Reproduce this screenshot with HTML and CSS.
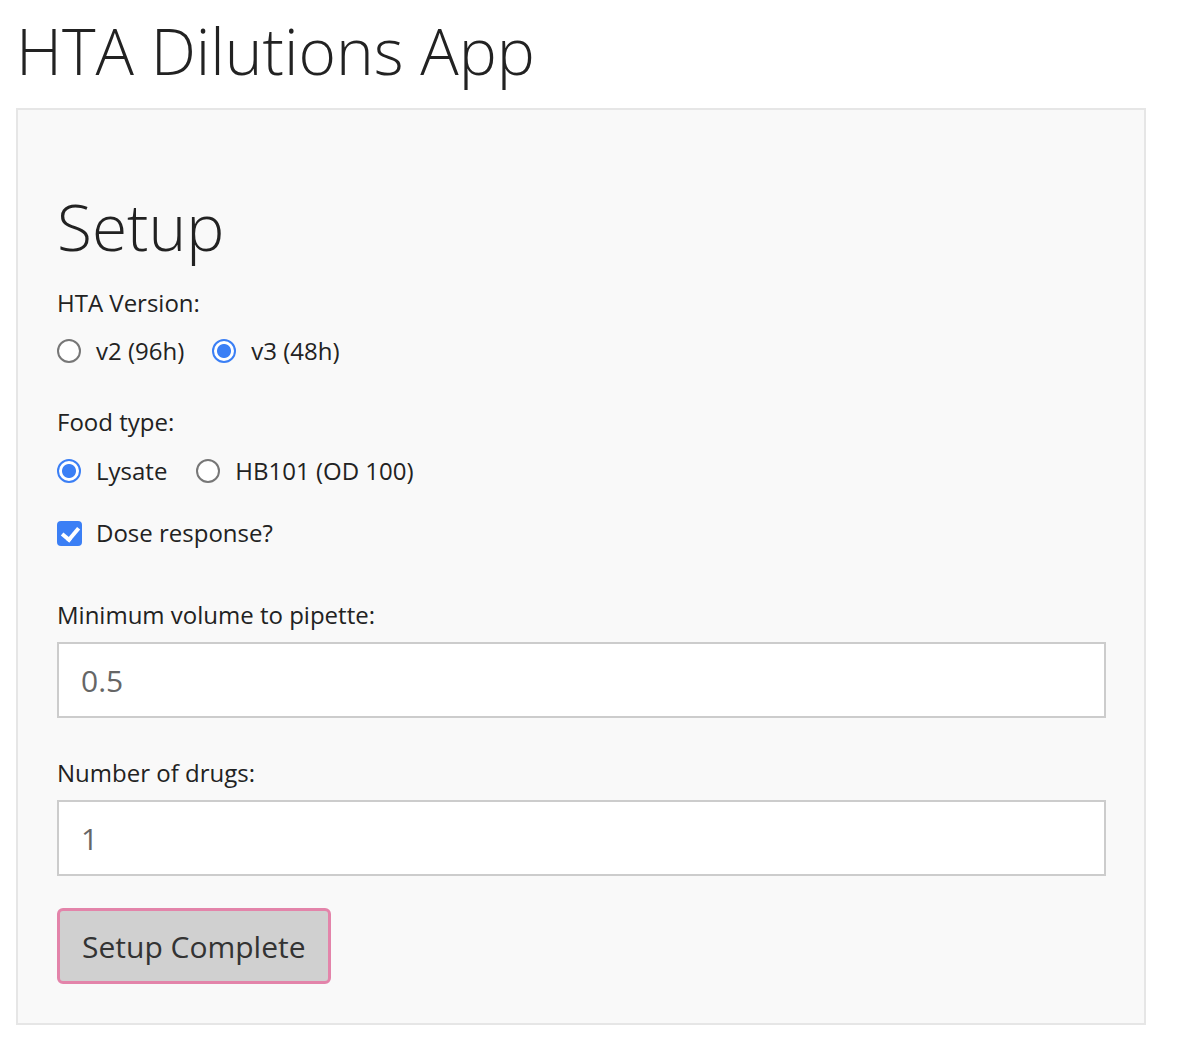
FILE: index.html
```html
<!DOCTYPE html>
<html>
<head>
<meta charset="utf-8">
<link rel="stylesheet" href="styles.css">
</head>
<body>
<div class="page">
  <h1 class="title">HTA Dilutions App</h1>
  <div class="well">
    <h2 class="section-title">Setup</h2>

    <div class="group group-radio1">
      <div class="label">HTA Version:</div>
      <div class="options">
        <label class="opt"><input type="radio" name="ver" class="radio"><span>v2 (96h)</span></label>
        <label class="opt"><input type="radio" name="ver" class="radio" checked><span>v3 (48h)</span></label>
      </div>
    </div>

    <div class="group group-radio2">
      <div class="label">Food type:</div>
      <div class="options">
        <label class="opt"><input type="radio" name="food" class="radio" checked><span>Lysate</span></label>
        <label class="opt"><input type="radio" name="food" class="radio"><span>HB101 (OD 100)</span></label>
      </div>
    </div>

    <div class="group group-check">
      <label class="opt"><input type="checkbox" class="check" checked><span>Dose response?</span></label>
    </div>

    <div class="group group-input1">
      <div class="label">Minimum volume to pipette:</div>
      <input class="field" type="text" value="0.5">
    </div>

    <div class="group group-input2">
      <div class="label">Number of drugs:</div>
      <input class="field" type="text" value="1">
    </div>

    <button class="btn">Setup Complete</button>
  </div>
</div>
</body>
</html>
```

FILE: styles.css
```css
* { box-sizing: border-box; }
html, body {
  margin: 0;
  padding: 0;
  background: #ffffff;
}
body {
  font-family: "Open Sans", "Noto Sans", sans-serif;
  color: #222222;
}
.page {
  padding: 12px 32px 30px 16px;
}
.title {
  margin: 0 0 19px 0;
  font-size: 64px;
  font-weight: 300;
  line-height: 77px;
  color: #222222;
}
.well {
  background: #f9f9f9;
  border: 2px solid #e6e6e6;
  padding: 39px 38px 39px 39px;
  display: flex;
  flex-direction: column;
  align-items: flex-start;
}
.section-title {
  margin: 41px 0 0 0;
  font-size: 64px;
  font-weight: 300;
  line-height: 73px;
  color: #222222;
}
.group {
  display: flex;
  flex-direction: column;
  align-self: stretch;
}
.label {
  font-size: 24px;
  line-height: 32px;
  color: #222222;
}
.group-radio1 { margin-top: 24px; }
.group-radio2 { margin-top: 39px; }
.group-check { margin-top: 30px; }
.group-input1 { margin-top: 50px; }
.group-input2 { margin-top: 39px; }
.options {
  display: flex;
  gap: 28px;
  margin-top: 16px;
}
.group-radio2 .options { margin-top: 17px; gap: 29px; }
.opt {
  display: flex;
  align-items: center;
  gap: 15px;
  font-size: 24px;
  line-height: 32px;
  color: #222222;
}
.radio {
  appearance: none;
  -webkit-appearance: none;
  margin: 0;
  width: 24px;
  height: 24px;
  border-radius: 50%;
  border: 2px solid #777777;
  background: #ffffff;
  flex: none;
}
.radio:checked {
  border: 2px solid #3b7ff5;
  background: radial-gradient(circle, #3b7ff5 0 6.5px, #ffffff 7.5px);
}
.check {
  appearance: none;
  -webkit-appearance: none;
  margin: 0;
  width: 25px;
  height: 25px;
  border-radius: 4px;
  background: #3b7ff5;
  flex: none;
  position: relative;
}
.check::after {
  content: "";
  position: absolute;
  left: 8px;
  top: 3px;
  width: 7px;
  height: 13px;
  border-right: 4px solid #ffffff;
  border-bottom: 4px solid #ffffff;
  transform: rotate(40deg);
}
.group-check .opt { gap: 14px; }
.field {
  margin-top: 11px;
  height: 76px;
  width: 100%;
  border: 2px solid #cccccc;
  background: #ffffff;
  padding: 0 22px;
  font-family: "Open Sans", "Noto Sans", sans-serif;
  font-size: 30px;
  color: #666666;
  outline: none;
}
.btn {
  margin-top: 32px;
  height: 76px;
  width: 274px;
  background: #d0d0d0;
  border: 3px solid #e384aa;
  border-radius: 6px;
  padding: 0 0 0 22px;
  text-align: left;
  font-family: "Open Sans", "Noto Sans", sans-serif;
  font-size: 30px;
  color: #333333;
}
```
